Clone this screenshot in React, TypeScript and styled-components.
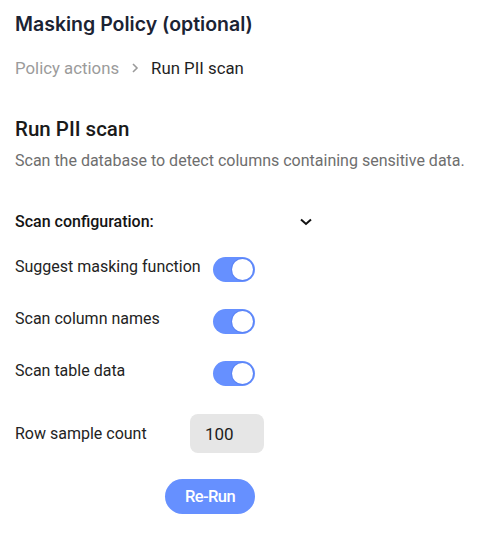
import React, { useState } from "react";
import styled, { createGlobalStyle } from "styled-components";

const Global = createGlobalStyle`
  html, body { margin: 0; padding: 0; background: #ffffff; }
  body { font-family: Roboto, "Liberation Sans", Arial, sans-serif; }
  * { box-sizing: border-box; }
`;

const Page = styled.div`
  width: 480px;
  margin-left: 15px;
  padding-top: 10px;
  display: flex;
  flex-direction: column;
`;

const Title = styled.h1`
  margin: 0;
  font-family: Inter, "Noto Sans", sans-serif;
  font-weight: 600;
  font-size: 19.5px;
  line-height: 28px;
  color: #1b2333;
`;

const Crumbs = styled.nav`
  margin-top: 19px;
  display: flex;
  align-items: center;
  gap: 12px;
  font-size: 16.8px;
  line-height: 22px;
`;

const Crumb = styled.span<{ $current?: boolean }>`
  color: ${(p) => (p.$current ? "#1f1f1f" : "#9b9b9b")};
`;

const Section = styled.section`
  margin-top: 37px;
  display: flex;
  flex-direction: column;
`;

const Heading = styled.h2`
  margin: 0;
  font-size: 20.5px;
  font-weight: 500;
  line-height: 26px;
  color: #1a1a1a;
`;

const Description = styled.p`
  margin: 8px 0 0;
  font-size: 16px;
  line-height: 22px;
  color: #6e6e6e;
`;

const ConfigHeader = styled.button`
  margin-top: 40px;
  width: 300px;
  padding: 0;
  border: 0;
  background: none;
  display: flex;
  align-items: center;
  justify-content: space-between;
  font-family: inherit;
  font-size: 16px;
  font-weight: 500;
  line-height: 20px;
  color: #141414;
  cursor: pointer;
`;

const Rows = styled.div`
  margin-top: 25px;
  display: flex;
  flex-direction: column;
  gap: 27px;
`;

const Row = styled.div<{ $offset: number; $gapAbove?: number }>`
  display: grid;
  grid-template-columns: ${(p) => p.$offset}px auto;
  align-items: center;
  margin-top: ${(p) => p.$gapAbove ?? 0}px;
  font-size: 16px;
  color: #232323;
`;

const Label = styled.span<{ $lift?: number }>`
  line-height: 20px;
  margin-top: ${(p) => -(p.$lift ?? 0)}px;
`;

const Track = styled.button<{ $on: boolean }>`
  width: 42px;
  height: 25px;
  border-radius: 13px;
  border: 0;
  padding: 2px;
  background: ${(p) => (p.$on ? "#6690ff" : "#cfd3da")};
  display: flex;
  justify-content: ${(p) => (p.$on ? "flex-end" : "flex-start")};
  align-items: center;
  cursor: pointer;
`;

const Knob = styled.span`
  width: 21px;
  height: 21px;
  border-radius: 50%;
  background: #ffffff;
  box-shadow: 0 0 0 1px rgba(70, 110, 230, 0.35);
`;

const NumberBox = styled.input`
  width: 74px;
  height: 39px;
  border: 0;
  border-radius: 8px;
  background: #e6e6e6;
  padding: 0 15px;
  font-family: inherit;
  font-size: 17px;
  color: #1c1c1c;
  outline: none;
`;

const Actions = styled.div`
  margin-top: 26px;
  width: 390px;
  display: flex;
  justify-content: center;
`;

const RunButton = styled.button`
  width: 90px;
  height: 35px;
  border: 0;
  border-radius: 18px;
  background: #6690ff;
  color: #ffffff;
  font-family: inherit;
  font-size: 16.5px;
  font-weight: 500;
  letter-spacing: -0.6px;
  cursor: pointer;
`;

const Toggle = ({ on, onClick }: { on: boolean; onClick: () => void }) => (
  <Track $on={on} onClick={onClick} aria-pressed={on}>
    <Knob />
  </Track>
);

export default function App() {
  const [flags, setFlags] = useState({ suggest: true, names: true, data: true });
  const flip = (k: keyof typeof flags) => () => setFlags((f) => ({ ...f, [k]: !f[k] }));
  return (
    <>
      <Global />
      <Page>
        <Title>Masking Policy (optional)</Title>
        <Crumbs>
          <Crumb>Policy actions</Crumb>
          <svg width="8" height="10" viewBox="0 0 8 10">
            <path d="M2 1l4 4-4 4" fill="none" stroke="#9b9b9b" strokeWidth="1.6" />
          </svg>
          <Crumb $current>Run PII scan</Crumb>
        </Crumbs>
        <Section>
          <Heading>Run PII scan</Heading>
          <Description>Scan the database to detect columns containing sensitive data.</Description>
          <ConfigHeader>
            <span>Scan configuration:</span>
            <svg width="14" height="10" viewBox="0 0 14 10" style={{ marginRight: 2 }}>
              <path d="M2 2.5l5 4.5 5-4.5" fill="none" stroke="#111" strokeWidth="2" />
            </svg>
          </ConfigHeader>
          <Rows>
            <Row $offset={198}>
              <Label $lift={6}>Suggest masking function</Label>
              <Toggle on={flags.suggest} onClick={flip("suggest")} />
            </Row>
            <Row $offset={198}>
              <Label $lift={6}>Scan column names</Label>
              <Toggle on={flags.names} onClick={flip("names")} />
            </Row>
            <Row $offset={198}>
              <Label $lift={6}>Scan table data</Label>
              <Toggle on={flags.data} onClick={flip("data")} />
            </Row>
            <Row $offset={175} $gapAbove={1}>
              <Label>Row sample count</Label>
              <NumberBox defaultValue="100" />
            </Row>
          </Rows>
          <Actions>
            <RunButton>Re-Run</RunButton>
          </Actions>
        </Section>
      </Page>
    </>
  );
}
